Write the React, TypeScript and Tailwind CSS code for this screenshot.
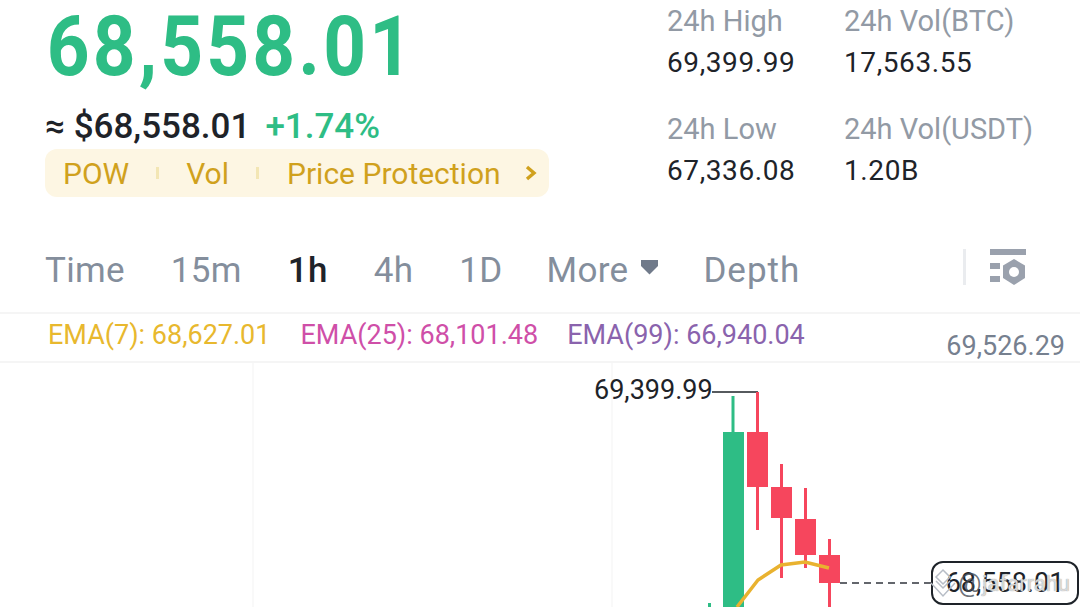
// BTC/USDT market header with the top of the candle chart
const tabs = ['Time', '15m', '1h', '4h', '1D'];

function StatBlock({ label, value }: { label: string; value: string }) {
  return (
    <div className="flex flex-col">
      <span className="text-[29px] leading-[40px] text-[#929aa5]">{label}</span>
      <span className="mt-[2px] text-[28px] leading-[40px] tracking-[0.6px] text-[#1e2329]">{value}</span>
    </div>
  );
}

function Chart() {
  return (
    <svg width="1080" height="244" viewBox="0 363 1080 244" className="block">
      <line x1="253" y1="363" x2="253" y2="607" stroke="#f7f7f7" strokeWidth="1.5" />
      <line x1="612" y1="363" x2="612" y2="607" stroke="#f7f7f7" strokeWidth="1.5" />
      <line x1="712" y1="392" x2="758" y2="392" stroke="#1e2329" strokeWidth="1.5" />
      <rect x="708" y="603" width="3" height="4" fill="#2ebd85" />
      <rect x="731.5" y="396" width="3" height="36" fill="#2ebd85" />
      <rect x="723" y="432" width="21" height="175" fill="#2ebd85" />
      <rect x="756" y="392" width="3" height="138" fill="#f6465d" />
      <rect x="747" y="432" width="21" height="55" fill="#f6465d" />
      <rect x="780" y="464" width="3" height="114" fill="#f6465d" />
      <rect x="771" y="487" width="21" height="31" fill="#f6465d" />
      <rect x="804" y="488" width="3" height="80" fill="#f6465d" />
      <rect x="795" y="519" width="21" height="36" fill="#f6465d" />
      <rect x="828" y="539" width="3" height="68" fill="#f6465d" />
      <rect x="819" y="555" width="21" height="28" fill="#f6465d" />
      <polyline points="737,607 758,580 781,565 805,562 829,568" fill="none" stroke="#e9b22f" strokeWidth="3.5" />
      <line x1="840" y1="583" x2="932" y2="583" stroke="#30353d" strokeWidth="1.5" strokeDasharray="7 5" />
    </svg>
  );
}

export default function App() {
  return (
    <div className="h-[607px] w-[1080px] overflow-hidden bg-white font-['Roboto',sans-serif]">
      {/* price + stats */}
      <div className="flex h-[236px]">
        <div className="w-[622px] pl-[45px]">
          <div className="h-[94px] origin-left scale-x-[0.9] whitespace-nowrap pl-[2px] text-[83px] leading-[94px] font-bold tracking-[3.5px] text-[#2ebd85]">
            68,558.01
          </div>
          <div className="mt-[14px] flex h-[38px] items-center whitespace-nowrap text-[35px] leading-[38px] font-medium">
            <span className="text-[#1e2329]">≈ $68,558.01</span>
            <span className="ml-[15px] text-[#2ebd85]">+1.74%</span>
          </div>
          <div className="mt-[3px] flex h-[48px] w-[504px] items-center rounded-[12px] bg-[#fdf6e3] pl-[18px] text-[30px] text-[#d0a11d]">
            <span>POW</span>
            <span className="ml-[27px] h-[12px] w-[3px] bg-[#f3e6b4]" />
            <span className="ml-[27px]">Vol</span>
            <span className="ml-[27px] h-[12px] w-[3px] bg-[#f3e6b4]" />
            <span className="ml-[28px]">Price Protection</span>
            <svg width="14" height="16" viewBox="0 0 14 16" className="ml-[23px]">
              <path d="M3 2 L10 8 L3 14" fill="none" stroke="#d0a11d" strokeWidth="3.4" />
            </svg>
          </div>
        </div>
        <div className="flex pl-[45px] pt-[1px]">
          <div className="flex w-[177px] flex-col gap-[26px]">
            <StatBlock label="24h High" value="69,399.99" />
            <StatBlock label="24h Low" value="67,336.08" />
          </div>
          <div className="flex flex-col gap-[26px]">
            <StatBlock label="24h Vol(BTC)" value="17,563.55" />
            <StatBlock label="24h Vol(USDT)" value="1.20B" />
          </div>
        </div>
      </div>

      {/* interval tabs */}
      <div className="flex h-[76px] items-center pb-[6px] pl-[45px] text-[35px] tracking-[0.3px] text-[#848e9c]">
        {tabs.map((t) => (
          <span key={t} className={t === '1h' ? 'mr-[46px] font-medium text-[#1e2329]' : 'mr-[46px]'}>
            {t}
          </span>
        ))}
        <span className="ml-[-2px]">More</span>
        <svg width="19" height="16" viewBox="0 0 19 16" className="ml-[12px] mt-[-8px]">
          <path d="M1 1 H18 V7 L9.5 15.5 L1 7 Z" fill="#707a8a" />
        </svg>
        <span className="ml-[44px] tracking-[1px]">Depth</span>
        <span className="mb-[8px] ml-[163px] h-[36px] w-[3px] bg-[#eaecef]" />
        <svg width="38" height="38" viewBox="0 0 38 38" className="mb-[8px] ml-[23px]">
          <rect x="1" y="1" width="36" height="6" fill="#9aa1ad" />
          <rect x="1" y="15" width="10" height="6" fill="#9aa1ad" />
          <rect x="1" y="28" width="10" height="6" fill="#9aa1ad" />
          <path d="M25 11 L36 17.5 V30 L25 37 L14 30 V17.5 Z" fill="#9aa1ad" />
          <circle cx="25" cy="24" r="5" fill="#fff" />
        </svg>
      </div>

      {/* indicator legend */}
      <div className="relative flex h-[51px] items-center border-y-[2px] border-y-[#f5f5f5] pb-[4px] pl-[48px] text-[27px]">
        <span className="text-[#e8b82e]">EMA(7): 68,627.01</span>
        <span className="ml-[30px] text-[#cf4fa8]">EMA(25): 68,101.48</span>
        <span className="ml-[29px] text-[#8a63ad]">EMA(99): 66,940.04</span>
        <span className="absolute right-[15px] top-[12px] text-[27px] text-[#76808f]">69,526.29</span>
      </div>

      {/* chart */}
      <div className="relative">
        <Chart />
        <span className="absolute left-[594px] top-[10px] text-[27px] leading-[34px] text-[#1e2329]">69,399.99</span>
        <div className="absolute left-[931px] top-[198px] flex h-[44px] w-[148px] items-center justify-center rounded-[12px] border-[2px] border-[#1e2329] bg-white text-[27px] text-[#1e2329]">
          68,558.01
        </div>
        {/* watermark */}
        <div className="absolute left-[929px] top-[200px] flex h-[40px] items-center">
          <svg width="28" height="30" viewBox="0 0 28 30" fill="none" stroke="#b7bdc6" strokeWidth="1.5">
            <path d="M14 2 L21 9 L14 16 L7 9 Z M7 13 L14 20 L21 13 M2 15 L14 28 L26 15" />
          </svg>
          <span className="ml-[1px] text-[26px] text-[#474d57]/80">@</span>
          <span className="ml-[1px] text-[22px] text-white/70 [text-shadow:0_0_1px_#777]">jafarrahu</span>
        </div>
      </div>
    </div>
  );
}
